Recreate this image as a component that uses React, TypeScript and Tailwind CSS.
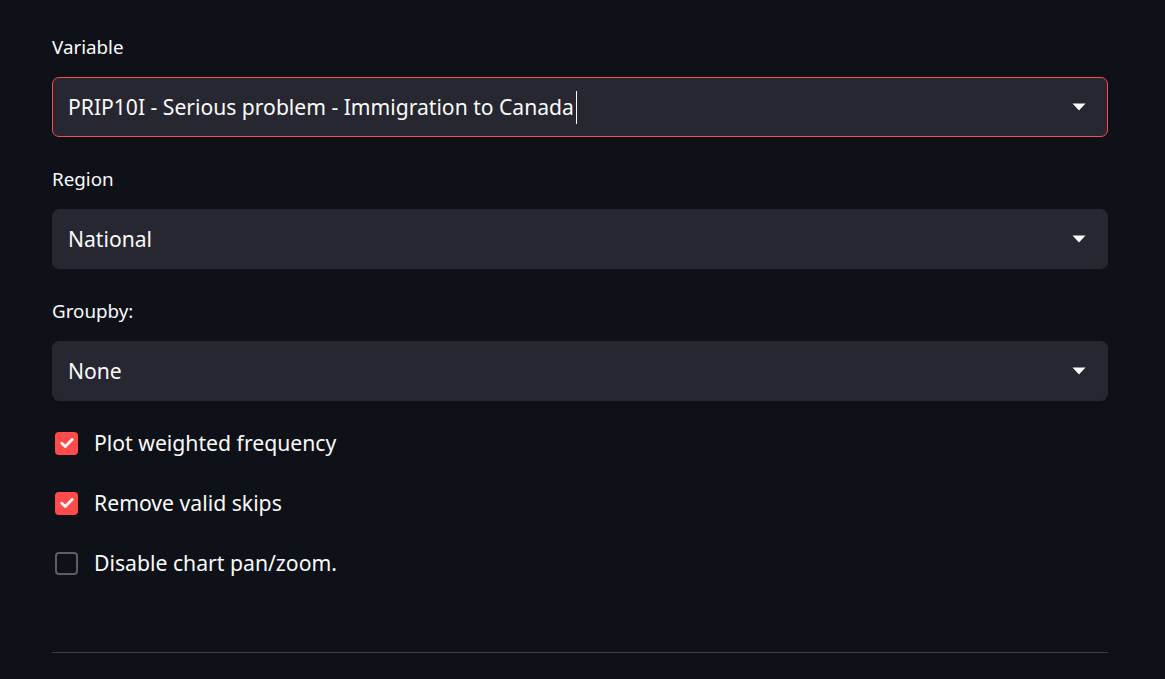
import React, { useState } from "react";

type Opt = { label: string; value: string; focused?: boolean };

const selects: Opt[] = [
  { label: "Variable", value: "PRIP10I - Serious problem - Immigration to Canada", focused: true },
  { label: "Region", value: "National" },
  { label: "Groupby:", value: "None" },
];

const Caret = () => (
  <svg width="14" height="8" viewBox="0 0 14 8" className="shrink-0">
    <path d="M0.5 0.5 H13.5 L7 7.5 Z" fill="#fafafa" strokeLinejoin="round" />
  </svg>
);

const Check = () => (
  <svg width="14" height="12" viewBox="0 0 14 12">
    <path d="M1.8 6.2 L5.3 9.5 L12.2 2.5" fill="none" stroke="#fafafa" strokeWidth="2.8" strokeLinecap="round" strokeLinejoin="round" />
  </svg>
);

const App: React.FC = () => {
  const [checks, setChecks] = useState([
    { label: "Plot weighted frequency", on: true },
    { label: "Remove valid skips", on: true },
    { label: "Disable chart pan/zoom.", on: false },
  ]);

  const toggle = (i: number) =>
    setChecks((c) => c.map((x, j) => (j === i ? { ...x, on: !x.on } : x)));

  return (
    <div
      className="min-h-screen w-full bg-[#0e1117] text-[#fafafa] pl-[52px] pr-[57px] pt-[35px] flex flex-col"
      style={{ fontFamily: "'Noto Sans', Lato, sans-serif" }}
    >
      {selects.map((s, i) => (
        <div key={s.label} className={i === 0 ? "" : "mt-[30px]"}>
          <div className="h-[24px] leading-[24px] text-[18.8px] mb-[18px]">{s.label}</div>
          <div
            className={`h-[60px] rounded-[7px] bg-[#262730] border flex items-center pl-[15px] pr-[21px] ${
              s.focused ? "border-[#ff4b4b]" : "border-[#262730]"
            }`}
          >
            <div className="flex-1 flex items-center text-[21.1px]">
              <span>{s.value}</span>
              {s.focused && <span className="ml-[2px] w-px h-[33px] bg-[#fafafa]" />}
            </div>
            <Caret />
          </div>
        </div>
      ))}

      <div className="mt-[30px] flex flex-col gap-[36px]">
        {checks.map((c, i) => (
          <label key={c.label} className="flex items-center h-[24px] cursor-pointer" onClick={() => toggle(i)}>
            <span
              className={`ml-[3px] w-[23px] h-[23px] rounded-[4px] flex items-center justify-center ${
                c.on ? "bg-[#ff4b4b]" : "border-2 border-[#5c5e66] bg-[#0e1117]"
              }`}
            >
              {c.on && <Check />}
            </span>
            <span className="ml-[16px] text-[21.2px]">{c.label}</span>
          </label>
        ))}
      </div>

      <div className="mt-[77px] h-px bg-[#3d3f46]" />
    </div>
  );
};

export default App;
